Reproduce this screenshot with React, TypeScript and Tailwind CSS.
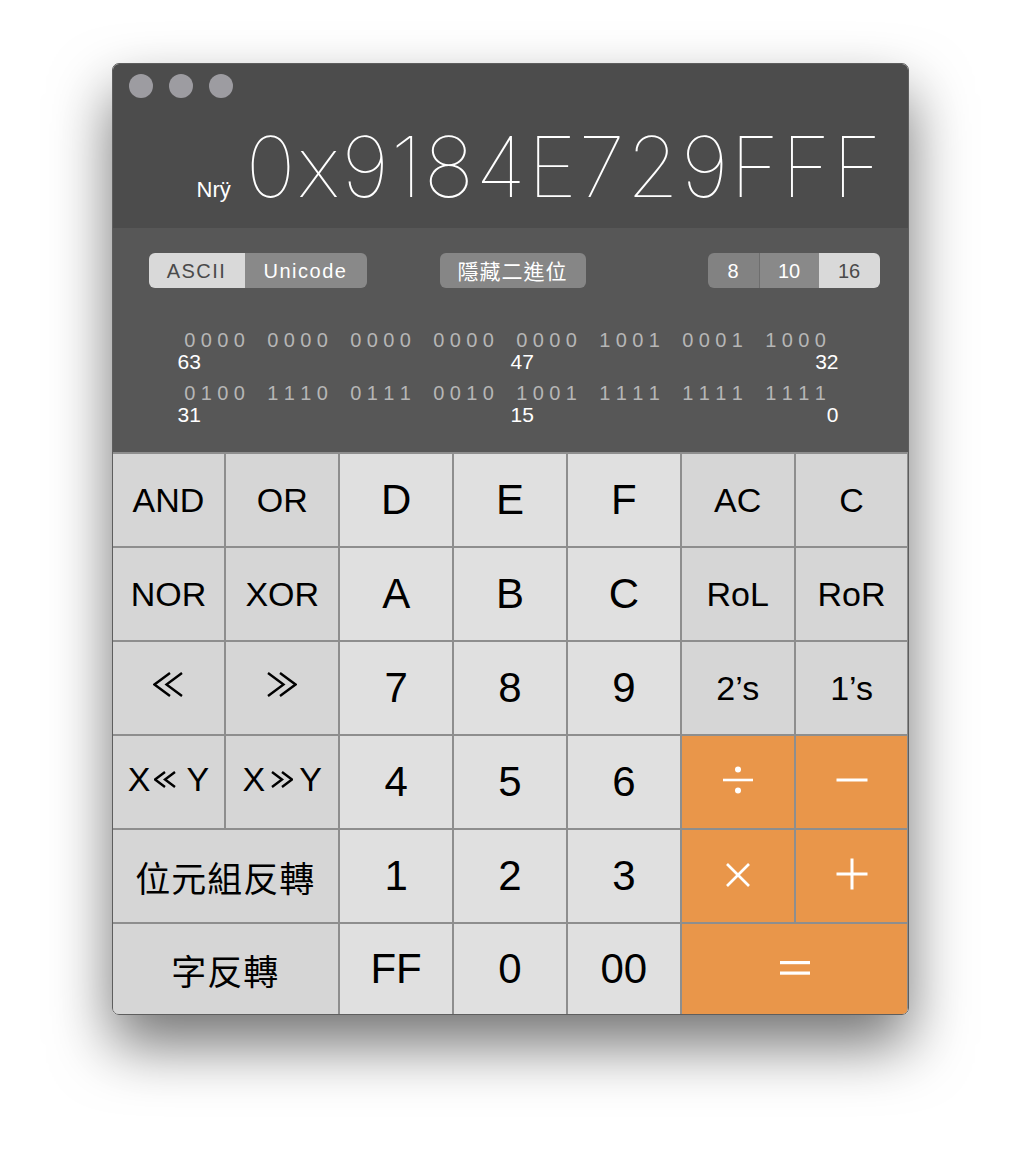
import type { ReactNode } from 'react';

const high = ['0000', '0000', '0000', '0000', '0000', '1001', '0001', '1000'];
const low = ['0100', '1110', '0111', '0010', '1001', '1111', '1111', '1111'];

function Chevrons({ dir, small }: { dir: 'left' | 'right'; small?: boolean }) {
  const w = small ? 22 : 30;
  const h = small ? 17 : 25;
  const m = h / 2;
  const c1 = small
    ? dir === 'left'
      ? `11,1 1,${m} 11,${h - 1}`
      : `1,1 11,${m} 1,${h - 1}`
    : dir === 'left'
      ? `17,1 1.5,${m} 17,${h - 1}`
      : `1,1 16.5,${m} 1,${h - 1}`;
  const c2 = small
    ? dir === 'left'
      ? `21,1 11,${m} 21,${h - 1}`
      : `11,1 21,${m} 11,${h - 1}`
    : dir === 'left'
      ? `29,1 13.5,${m} 29,${h - 1}`
      : `13,1 28.5,${m} 13,${h - 1}`;
  return (
    <svg width={w} height={h} viewBox={`0 0 ${w} ${h}`} fill="none" stroke="black" strokeWidth="2.4">
      <polyline points={c1} />
      <polyline points={c2} />
    </svg>
  );
}

function Op({ kind }: { kind: string }) {
  if (kind === 'div')
    return (
      <svg width="32" height="28" viewBox="0 0 32 28" fill="white" className="-mt-[4px]">
        <rect x="1" y="12.7" width="30" height="2.6" />
        <circle cx="16" cy="3.5" r="3" />
        <circle cx="16" cy="24.5" r="3" />
      </svg>
    );
  if (kind === 'sub')
    return (
      <svg width="32" height="6" viewBox="0 0 32 6" fill="white" className="-mt-[4px]">
        <rect x="0.5" y="1.5" width="31" height="3" />
      </svg>
    );
  if (kind === 'mul')
    return (
      <svg width="26" height="26" viewBox="0 0 26 26" stroke="white" strokeWidth="2.6" className="-mt-[3px]">
        <line x1="2" y1="2" x2="24" y2="24" />
        <line x1="24" y1="2" x2="2" y2="24" />
      </svg>
    );
  if (kind === 'add')
    return (
      <svg width="32" height="32" viewBox="0 0 32 32" fill="white" className="-mt-[4px]">
        <rect x="0.5" y="14.5" width="31" height="3" />
        <rect x="14.5" y="0.5" width="3" height="31" />
      </svg>
    );
  return (
    <svg width="32" height="16" viewBox="0 0 32 16" fill="white" className="-mt-[2px]">
      <rect x="1" y="1" width="30" height="3.2" />
      <rect x="1" y="11.5" width="30" height="3.2" />
    </svg>
  );
}

function Key({
  children,
  tone = 'fn',
  size = 'fn',
  span,
}: {
  children: ReactNode;
  tone?: 'fn' | 'num' | 'op';
  size?: 'fn' | 'num' | 'cjk';
  span?: boolean;
}) {
  const bg = tone === 'num' ? 'bg-[#e0e0e0]' : tone === 'op' ? 'bg-[#e9964a]' : 'bg-[#d6d6d6]';
  const txt =
    size === 'num' ? 'text-[42px]' : size === 'cjk' ? 'text-[35px] tracking-[1px]' : 'text-[34px]';
  return (
    <div
      className={`${bg} ${txt} ${span ? 'col-span-2' : ''} flex items-center justify-center text-black leading-none`}
    >
      {children}
    </div>
  );
}

function BitRow({ groups, labels }: { groups: string[]; labels: string[] }) {
  return (
    <div>
      <div className="flex gap-[17px] pl-[69px] text-[20px] leading-[22px] text-[#b6b6b6]">
        {groups.map((g, i) => (
          <div key={i} className="flex">
            {g.split('').map((d, j) => (
              <span key={j} className="w-[16.5px] text-center">
                {d}
              </span>
            ))}
          </div>
        ))}
      </div>
      <div className="flex pl-[65px] pr-[69px] text-[21px] leading-[22px] text-white">
        <span className="w-[333px]">{labels[0]}</span>
        <span className="flex-1">{labels[1]}</span>
        <span>{labels[2]}</span>
      </div>
    </div>
  );
}

export default function App() {
  return (
    <div className="min-h-[1174px] bg-white pt-[63px]" style={{ fontFamily: '"Liberation Sans", Arial, sans-serif' }}>
      <div className="mx-auto w-[797px] rounded-[7px] overflow-hidden border border-[#5e5e5e] shadow-[0_30px_60px_rgba(0,0,0,0.55)]">
        {/* display */}
        <div className="h-[164px] bg-[#4c4c4c] flex flex-col">
          <div className="flex gap-[16px] pl-[16px] pt-[10px]">
            <div className="w-[24px] h-[24px] rounded-full bg-[#9d9ca1]" />
            <div className="w-[24px] h-[24px] rounded-full bg-[#9d9ca1]" />
            <div className="w-[24px] h-[24px] rounded-full bg-[#9d9ca1]" />
          </div>
          <div className="flex items-baseline justify-end pr-[24px] mt-[25px]">
            <span className="text-[22px] text-white mr-[15px]">Nrÿ</span>
            <span
              className="text-[84px] leading-[88px] text-white font-thin tracking-[2px]"
              style={{ fontFamily: 'Inter, "Open Sans", sans-serif' }}
            >
              0x9184E729FFF
            </span>
          </div>
        </div>

        {/* options + bits */}
        <div className="h-[224px] bg-[#575757] pt-[25px]">
          <div className="flex items-center pl-[36px] pr-[28px] text-[20px]">
            <div className="flex h-[35px] rounded-[6px] overflow-hidden tracking-[1.5px]">
              <div className="w-[96px] bg-[#d9d9d9] text-[#4a4a4a] flex items-center justify-center">
                ASCII
              </div>
              <div className="w-[122px] bg-[#898989] text-white flex items-center justify-center">
                Unicode
              </div>
            </div>
            <div
              className="ml-[73px] w-[146px] h-[35px] rounded-[6px] bg-[#868686] text-white text-[21px] tracking-[1px] flex items-center justify-center"
              style={{ fontFamily: '"Noto Sans CJK TC", "Liberation Sans", sans-serif' }}
            >
              隱藏二進位
            </div>
            <div className="ml-auto flex h-[35px] rounded-[6px] overflow-hidden">
              <div className="w-[52px] bg-[#828282] text-white flex items-center justify-center border-r border-[#6e6e6e]">
                8
              </div>
              <div className="w-[59px] bg-[#898989] text-white flex items-center justify-center">10</div>
              <div className="w-[61px] bg-[#d9d9d9] text-[#4a4a4a] flex items-center justify-center">16</div>
            </div>
          </div>
          <div className="mt-[41px] flex flex-col gap-[9px]">
            <BitRow groups={high} labels={['63', '47', '32']} />
            <BitRow groups={low} labels={['31', '15', '0']} />
          </div>
        </div>

        {/* keypad */}
        <div className="grid grid-cols-7 grid-rows-[92px_92px_92px_92px_92px_90px] gap-[2px] pt-[2px] bg-[#8e8e8e]">
          <Key>AND</Key>
          <Key>OR</Key>
          <Key tone="num" size="num">D</Key>
          <Key tone="num" size="num">E</Key>
          <Key tone="num" size="num">F</Key>
          <Key>AC</Key>
          <Key>C</Key>

          <Key>NOR</Key>
          <Key>XOR</Key>
          <Key tone="num" size="num">A</Key>
          <Key tone="num" size="num">B</Key>
          <Key tone="num" size="num">C</Key>
          <Key>RoL</Key>
          <Key>RoR</Key>

          <Key>
            <span className="-mt-[8px]">
              <Chevrons dir="left" />
            </span>
          </Key>
          <Key>
            <span className="-mt-[8px]">
              <Chevrons dir="right" />
            </span>
          </Key>
          <Key tone="num" size="num">7</Key>
          <Key tone="num" size="num">8</Key>
          <Key tone="num" size="num">9</Key>
          <Key>2’s</Key>
          <Key>1’s</Key>

          <Key>
            <span className="flex items-center -mt-[6px]">
              X
              <span className="ml-[4px] mr-[10px]">
                <Chevrons dir="left" small />
              </span>
              Y
            </span>
          </Key>
          <Key>
            <span className="flex items-center -mt-[6px]">
              X
              <span className="ml-[6px] mr-[6px]">
                <Chevrons dir="right" small />
              </span>
              Y
            </span>
          </Key>
          <Key tone="num" size="num">4</Key>
          <Key tone="num" size="num">5</Key>
          <Key tone="num" size="num">6</Key>
          <Key tone="op"><Op kind="div" /></Key>
          <Key tone="op"><Op kind="sub" /></Key>

          <Key span size="cjk">
            <span style={{ fontFamily: '"Noto Sans CJK TC", sans-serif' }}>位元組反轉</span>
          </Key>
          <Key tone="num" size="num">1</Key>
          <Key tone="num" size="num">2</Key>
          <Key tone="num" size="num">3</Key>
          <Key tone="op"><Op kind="mul" /></Key>
          <Key tone="op"><Op kind="add" /></Key>

          <Key span size="cjk">
            <span style={{ fontFamily: '"Noto Sans CJK TC", sans-serif' }}>字反轉</span>
          </Key>
          <Key tone="num" size="num">FF</Key>
          <Key tone="num" size="num">0</Key>
          <Key tone="num" size="num">00</Key>
          <Key tone="op" span><Op kind="eq" /></Key>
        </div>
      </div>
    </div>
  );
}
